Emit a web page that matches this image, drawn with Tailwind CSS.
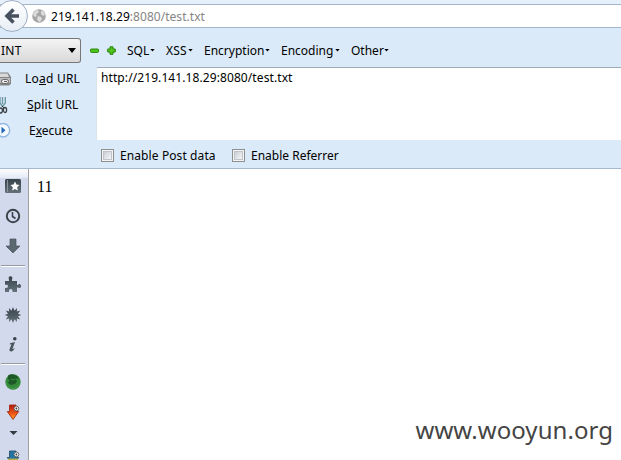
<!DOCTYPE html>
<html lang="en"><head><meta charset="utf-8"><title>test.txt</title>
<script src="https://cdn.jsdelivr.net/npm/@tailwindcss/browser@4"></script></head>
<body class="w-[621px] h-[460px] overflow-hidden bg-white text-black text-[12px] leading-[16px] font-['Noto_Sans','Open_Sans',sans-serif]">
<div class="flex flex-col h-[460px] relative">
<header class="h-[28px] shrink-0 pt-[4px] bg-[#e6f0fa] relative">
  <div class="h-[24px] flex items-center bg-white border-y border-[#a3b5c8] pl-[32px]">
    <svg class="w-[14px] h-[14px] shrink-0" viewBox="0 0 14 14"><circle cx="7" cy="7" r="6.8" fill="#a6a6a6"/><path d="M2 3L5 1L7 2L6 4L4 5L5 7L3 8L1 6ZM9 2L11 2L13 5L12 7L10 6L9 5ZM6 7L9 8L10 10L8 13L6 12L5 10Z" fill="#dcdcdc"/></svg>
    <span class="ml-[5px] w-[154px] whitespace-nowrap tracking-[0.04px] pt-[1px]">219.141.18.29<span class="text-[#858585]">:8080/test.txt</span></span>
  </div>
  <svg class="absolute left-0 top-0 w-[29px] h-[33px] z-10" viewBox="0 0 29 33"><defs><linearGradient id="b" x2="0" y2="1"><stop stop-color="#fff"/><stop offset="1" stop-color="#e8eef6"/></linearGradient></defs><circle cx="12" cy="16" r="15.5" fill="url(#b)" stroke="#9cafc4"/><path d="M13.5 9.5L7 16L13.5 22.5M7.5 16H19" fill="none" stroke="#47515f" stroke-width="3.6"/></svg>
</header>
<section class="h-[141px] shrink-0 bg-[#daeaf8] border-b border-[#a5b9d2] flex flex-col">
  <div class="h-[39px] flex items-center pt-[6px]">
    <div class="w-[81px] h-[25px] shrink-0 border border-l-0 border-[#777] rounded-r-[3px] bg-linear-to-b from-[#f4f4f4] to-[#d9d9d9] flex items-center justify-between pr-[4px]"><span class="tracking-[0.3px] pl-[1px]">INT</span><svg class="w-[8px] h-[5px]" viewBox="0 0 8 5"><path d="M0 0H8L4 5Z"/></svg></div>
    <svg class="ml-[9px] w-[9px] h-[9px] shrink-0" viewBox="0 0 9 9"><rect x=".5" y="3" width="8" height="3.4" rx="1" fill="#51c51b" stroke="#288409"/></svg>
    <svg class="ml-[8px] w-[9px] h-[9px] shrink-0" viewBox="0 0 9 9"><path d="M3 .8H6V3H8.3V6H6V8.3H3V6H.7V3H3Z" fill="#51c51b" stroke="#288409" stroke-linejoin="round"/></svg>
    <nav class="ml-[11px] flex items-center whitespace-nowrap">
      <div class="w-[39px] flex items-center"><span class="w-[23px]">SQL</span><svg class="w-[5px] h-[3px]" viewBox="0 0 5 3"><path d="M.3 0H4.7L2.5 2.5Z"/></svg></div>
      <div class="w-[38px] flex items-center"><span class="w-[22px] tracking-[0.2px]">XSS</span><svg class="w-[5px] h-[3px]" viewBox="0 0 5 3"><path d="M.3 0H4.7L2.5 2.5Z"/></svg></div>
      <div class="w-[77px] flex items-center"><span class="w-[61px]">Encryption</span><svg class="w-[5px] h-[3px]" viewBox="0 0 5 3"><path d="M.3 0H4.7L2.5 2.5Z"/></svg></div>
      <div class="w-[70px] flex items-center"><span class="w-[54px]">Encoding</span><svg class="w-[5px] h-[3px]" viewBox="0 0 5 3"><path d="M.3 0H4.7L2.5 2.5Z"/></svg></div>
      <div class="flex items-center"><span class="w-[33px]">Other</span><svg class="w-[5px] h-[3px]" viewBox="0 0 5 3"><path d="M.3 0H4.7L2.5 2.5Z"/></svg></div>
    </nav>
  </div>
  <div class="flex h-[101px]">
    <div class="w-[96px] shrink-0 flex flex-col">
      <div class="h-[24px] flex items-center"><svg class="w-[12px] h-[16px] mr-[13px]" viewBox="0 0 12 16"><path d="M0 1.5H8L11 6V13L9 14.5H0Z" fill="#858585"/><path d="M0 2.5H7.5L9 6H0Z" fill="#d9d9d9"/><path d="M0 7H10V12H0Z" fill="#bbb"/><rect x="1.5" y="8.5" width="7" height="4" rx="2" fill="#eee" stroke="#666"/><path d="M4 10.5H7" stroke="#555"/></svg><span class="whitespace-nowrap tracking-[0.22px]">Lo<u>a</u>d URL</span></div>
      <div class="h-[27px] flex items-center"><svg class="w-[8px] h-[18px] mr-[19px]" viewBox="0 0 8 18" fill="none"><path d="M0 1V7L3 11M5.3 1V7L2 11M2.5 1V8" stroke="#6f99a6" stroke-width="1.4"/><path d="M2 10L4 12" stroke="#333"/><ellipse cx=".8" cy="14.5" rx="1.6" ry="2.5" stroke="#3c4246" stroke-width="1.3"/><ellipse cx="5" cy="14" rx="1.6" ry="2.5" stroke="#3c4246" stroke-width="1.3"/></svg><span class="whitespace-nowrap tracking-[0.15px]"><u>S</u>plit URL</span></div>
      <div class="h-[26px] flex items-center"><svg class="w-[11px] h-[16px] mr-[18px]" viewBox="0 0 11 16"><circle cx="3" cy="7.2" r="6.7" fill="#f4faff" stroke="#94b8e4" stroke-width="1.5"/><path d="M1.5 3.7L5.5 7.2L1.5 10.7Z" fill="#1f67b5"/></svg><span class="whitespace-nowrap">E<u>x</u>ecute</span></div>
    </div>
    <div class="flex-1 flex flex-col">
      <div class="h-[73px] bg-white border-t border-l border-t-[#a0aab7] border-l-[#dce3ea] rounded-l-[2px] pl-[4px] pt-[2px] whitespace-nowrap tracking-[0.09px]">http://219.141.18.29:8080/test.txt</div>
      <div class="h-[28px] flex items-center pl-[5px] pt-[3px] whitespace-nowrap">
        <span class="w-[13px] h-[13px] border border-[#8e8f8f] bg-[#f4f4f4] p-[1px]"><span class="block size-[9px] border border-[#c0c4cb] bg-linear-to-br from-[#cbcfd5] to-[#f6f6f6]"></span></span>
        <span class="ml-[6px] w-[112px] tracking-[0.1px] pt-[1px]">Enable Post data</span>
        <span class="w-[13px] h-[13px] border border-[#8e8f8f] bg-[#f4f4f4] p-[1px]"><span class="block size-[9px] border border-[#c0c4cb] bg-linear-to-br from-[#cbcfd5] to-[#f6f6f6]"></span></span>
        <span class="ml-[6px] pt-[1px]">Enable Referrer</span>
      </div>
    </div>
  </div>
</section>
<main class="flex flex-1 min-h-0">
  <aside class="w-[29px] shrink-0 border-r border-[#a0a0a0] bg-[#d3d9ed] relative overflow-hidden">
    <svg class="w-[28px] h-[291px]" viewBox="0 169 28 291"><defs><linearGradient id="t" x2="0" y2="1"><stop stop-color="#fdfdff"/><stop offset="1" stop-color="#e6eaf6"/></linearGradient><linearGradient id="d" x2="0" y2="1"><stop stop-color="#374248"/><stop offset="1" stop-color="#647179"/></linearGradient><linearGradient id="r" x2="0" y2="1"><stop stop-color="#b51a0c"/><stop offset=".6" stop-color="#ee5716"/><stop offset="1" stop-color="#ffad1f"/></linearGradient></defs>
      <rect y="169" width="28" height="9" fill="url(#t)"/>
      <rect x="5" y="179" width="16" height="14" rx="1.5" fill="url(#d)"/><path d="M7.5 180V192" stroke="#89949d"/><path d="M15 181.5L16.4 184.6L19.5 185L17.2 187.2L17.8 190.5L15 188.9L12.2 190.5L12.8 187.2L10.5 185L13.6 184.6Z" fill="#fff"/>
      <circle cx="13" cy="216" r="6.2" fill="none" stroke="#39444a" stroke-width="2"/><path d="M12.5 212V216.5L15.5 218.5" fill="none" stroke="#39444a" stroke-width="1.6"/>
      <path d="M10 239H16V246H20L13 253L6 246H10Z" fill="#5b6870" stroke="#47535b" stroke-width=".7"/>
      <path d="M1 265.5H25" stroke="#999ba2"/><path d="M1 266.5H25" stroke="#fff"/>
      <path d="M5 281H9V280Q7.8 276.3 10.5 276.3Q13.2 276.3 12 280V281H17V285H18Q18.5 283.5 20 284Q21.3 285 21 287Q20 288.8 18 287.5H17V292H12.5V291Q12.5 289 10.7 289Q9 289 9 291V292H5V288H6Q8.3 287.8 8 286Q7.8 284.5 6 284.8H5Z" fill="url(#d)"/>
      <path d="M13 307L14.5 310.8L17 308L16.8 311.6L20.2 310.6L18 313.7L21.3 315L18 316.3L20.2 319.4L16.8 318.4L17 322L14.5 319.2L13 323L11.5 319.2L9 322L9.2 318.4L5.8 319.4L8 316.3L4.7 315L8 313.7L5.8 310.6L9.2 311.6L9 308L11.5 310.8Z" fill="url(#d)"/>
      <circle cx="14.8" cy="338.8" r="1.8" fill="#39444a"/><path d="M10 343.2L15 342L12.4 349Q13 349.4 15 347.8Q13.3 351.5 11 351.5Q9 351.4 9.6 349L11.5 344.2L9.8 344.4Z" fill="#48545c"/>
      <path d="M1 363.5H25" stroke="#999ba2"/><path d="M1 364.5H25" stroke="#fff"/>
      <circle cx="13" cy="382" r="7.7" fill="#34883a"/><path d="M8 375.5Q12 373 17 376L19 379L15 378L17 381L15 384L11 385L8 383L10 380L8 379Z" fill="#1d5826"/><path d="M11 379L13 380L15 379" fill="none" stroke="#3b9140"/><path d="M6 382Q7 388 13 388.5Q18 388 19.5 384" fill="none" stroke="#469c4a"/>
      <path d="M9.5 405H16V411.5H18.7L13 419.5L7.3 411.5H9.5Z" fill="url(#r)" stroke="#a52a11" stroke-width=".9"/><circle cx="16.4" cy="408.5" r="2.4" fill="#eee" stroke="#555" stroke-width=".8"/><circle cx="16.4" cy="408.5" r=".9" fill="#444"/>
      <path d="M9.5 431H17.5L13.5 435Z" fill="#303a3f"/>
      <path d="M9.5 451H16V457.5H18.7L13 465.5L7.3 457.5H9.5Z" fill="#2473a5" stroke="#24526d" stroke-width=".9"/><path d="M8 458.5H18V460H8Z" fill="#baad4b"/><circle cx="16.4" cy="454.5" r="2.4" fill="#eee" stroke="#555" stroke-width=".8"/><circle cx="16.4" cy="454.5" r=".9" fill="#444"/>
    </svg>
  </aside>
  <div class="flex-1 flex flex-col justify-between">
    <pre class="pl-[8px] pt-[9px] text-[16px] leading-[18px] font-['Liberation_Serif',serif]">11</pre>
    <div class="self-end pr-[8px] pb-[13px] text-[24px] leading-[34px] tracking-[0.05px] text-[#444] whitespace-nowrap">www.wooyun.org</div>
  </div>
</main>
</div>
</body></html>
